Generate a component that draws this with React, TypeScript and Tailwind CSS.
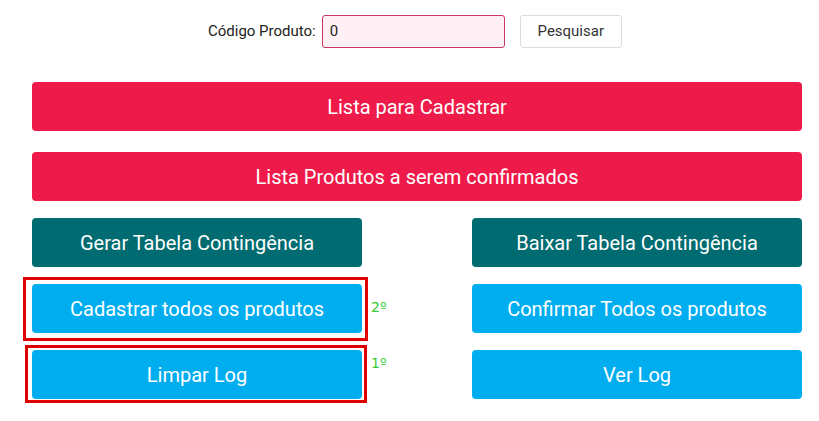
import React from "react";

const btnBase =
  "w-full h-[49px] rounded-[4px] text-white text-[20px] flex items-center justify-center";

export default function App() {
  return (
    <div className="w-[819px] h-[421px] bg-white overflow-hidden" style={{ fontFamily: "Roboto, 'Liberation Sans', sans-serif" }}>
      <div className="ml-[32px] w-[770px] pt-[15px]">
        <div className="flex items-center h-[33px] pl-[176px]">
          <span className="text-[15px] text-[#222] mr-[6px]">Código Produto:</span>
          <div className="w-[183px] h-[33px] border border-[#c8385c] bg-[#fff0f5] rounded-[3px] flex items-center px-[7px] text-[15px] text-[#222]">
            0
          </div>
          <div className="ml-[15px] w-[102px] h-[33px] border border-[#dcdcdc] rounded-[3px] bg-white flex items-center justify-center text-[15px] text-[#333]">
            Pesquisar
          </div>
        </div>

        <div className={`${btnBase} bg-[#ee1a49] mt-[34px]`}>Lista para Cadastrar</div>
        <div className={`${btnBase} bg-[#ee1a49] mt-[21px]`}>Lista Produtos a serem confirmados</div>

        <div className="grid grid-cols-[330px_330px] gap-x-[110px] gap-y-[17px] mt-[17px]">
          <div className={`${btnBase} bg-[#006c71]`}>Gerar Tabela Contingência</div>
          <div className={`${btnBase} bg-[#006c71]`}>Baixar Tabela Contingência</div>

          <div className="relative">
            <div className="absolute left-[-9px] right-[-6px] top-[-7px] bottom-[-8px] border-[3px] border-[#e00000]" />
            <div className={`${btnBase} bg-[#00adef] relative`}>Cadastrar todos os produtos</div>
            <span className="absolute left-[339px] top-[16px] text-[14px] text-[#33cc33] leading-none" style={{ fontFamily: "'DejaVu Sans', sans-serif" }}>2º</span>
          </div>
          <div className={`${btnBase} bg-[#00adef]`}>Confirmar Todos os produtos</div>

          <div className="relative">
            <div className="absolute left-[-7px] right-[-5px] top-[-5px] bottom-[-4px] border-[3px] border-[#e00000]" />
            <div className={`${btnBase} bg-[#00adef] relative`}>Limpar Log</div>
            <span className="absolute left-[339px] top-[6px] text-[14px] text-[#33cc33] leading-none" style={{ fontFamily: "'DejaVu Sans', sans-serif" }}>1º</span>
          </div>
          <div className={`${btnBase} bg-[#00adef]`}>Ver Log</div>
        </div>
      </div>
    </div>
  );
}
